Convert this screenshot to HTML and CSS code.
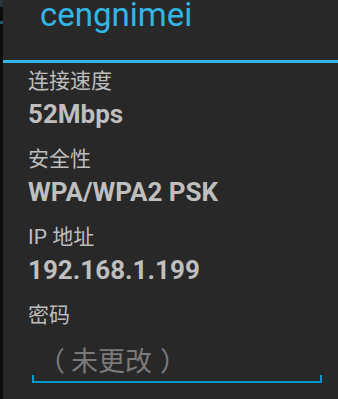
FILE: index.html
```html
<!DOCTYPE html>
<html lang="zh-CN">
<head>
  <meta charset="UTF-8" />
  <meta name="viewport" content="width=device-width, initial-scale=1.0"/>
  <title>cengnimei</title>
  <link rel="stylesheet" href="styles.css">
</head>
<body>

  <div class="screen">
    <div class="edge">
      <span class="edge-top"></span>
      <span class="edge-mark"></span>
    </div>

    <div class="dialog">
      <div class="dialog-title">cengnimei</div>
      <div class="divider"></div>

      <div class="info">
        <div class="info-row">
          <div class="info-label">连接速度</div>
          <div class="info-value">52Mbps</div>
        </div>
        <div class="info-row">
          <div class="info-label">安全性</div>
          <div class="info-value">WPA/WPA2 PSK</div>
        </div>
        <div class="info-row">
          <div class="info-label">IP 地址</div>
          <div class="info-value">192.168.1.199</div>
        </div>
        <div class="info-row">
          <div class="info-label">密码</div>
          <div class="edit-text">
            <span class="hint"><span class="paren-open">（</span>未更改<span class="paren-close">）</span></span>
          </div>
        </div>
      </div>
    </div>
  </div>

</body>
</html>
```

FILE: styles.css
```css
body {
  font-family: Roboto, "Noto Sans CJK SC", sans-serif;
  background-color: #000;
  margin: 0;
  padding: 0;
}
.screen {
  display: flex;
  width: 338px;
  height: 399px;
  overflow: hidden;
}
.edge {
  width: 3px;
  background-color: #0c0c0c;
  display: flex;
  flex-direction: column;
}
.edge-top {
  height: 7px;
  background-color: #23343b;
}
.edge-mark {
  height: 3px;
  margin-top: 14px;
  background-color: #1d5a70;
}
.dialog {
  flex: 1;
  background-color: #282828;
}
.dialog-title {
  height: 60px;
  padding-left: 37px;
  color: #33b5e5;
  font-size: 33px;
  line-height: 30px;
}
.divider {
  height: 3px;
  background-color: #33b5e5;
}
.info {
  padding: 4px 16px 0 25px;
}
.info-row {
  margin-bottom: 14px;
}
.info-label {
  color: #bdbdbd;
  font-size: 21px;
  line-height: 28px;
}
.info-value {
  margin-top: 2px;
  color: #bfbfbf;
  font-size: 26px;
  font-weight: bold;
  line-height: 34px;
}
.edit-text {
  position: relative;
  margin: 14px 0 0 4px;
  padding-left: 12px;
  height: 38px;
  line-height: 34px;
  border-bottom: 2px solid #0099cc;
  font-family: "Noto Sans CJK SC", sans-serif;
  font-size: 27px;
  white-space: nowrap;
}
.edit-text::before,
.edit-text::after {
  content: "";
  position: absolute;
  bottom: 0;
  width: 2px;
  height: 6px;
  background-color: #0099cc;
}
.edit-text::before {
  left: 0;
}
.edit-text::after {
  right: 0;
}
.hint {
  color: #7a7a7a;
}
.paren-open {
  margin: 0 6px 0 -6px;
}
.paren-close {
  margin-left: 8px;
}
```
